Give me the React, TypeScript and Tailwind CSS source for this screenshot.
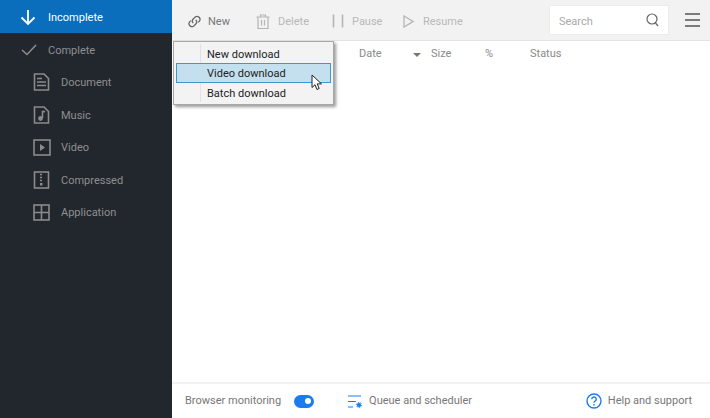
import React from "react";

const Doc = () => (
  <svg width="17" height="18" viewBox="0 0 17 18" fill="none" stroke="#8b8b8b" strokeWidth="1.6">
    <path d="M1.5 1h9.5l4.5 4.5V17h-14z" />
    <path d="M4 5.5h5M4 9h9M4 12.5h9" />
  </svg>
);
const Music = () => (
  <svg width="17" height="18" viewBox="0 0 17 18" fill="none" stroke="#8b8b8b" strokeWidth="1.6">
    <path d="M1.5 1h9.5l4.5 4.5V17h-14z" />
    <path d="M9.5 5v7" />
    <circle cx="7.5" cy="12.5" r="1.6" fill="#8b8b8b" />
    <path d="M9.5 5l2.5 1" />
  </svg>
);
const Video = () => (
  <svg width="18" height="17" viewBox="0 0 18 17" fill="none" stroke="#8b8b8b" strokeWidth="1.6">
    <rect x="1" y="1" width="16" height="15" />
    <path d="M7 5l5 3.5-5 3.5z" fill="#8b8b8b" stroke="none" />
  </svg>
);
const Zip = () => (
  <svg width="17" height="18" viewBox="0 0 17 18" fill="none" stroke="#8b8b8b" strokeWidth="1.6">
    <rect x="1.5" y="1" width="14" height="16" />
    <path d="M7 3.5h2M7 6.5h2M7 9.5h2" />
    <path d="M7 12h2.5v2.5h-2.5z" fill="#8b8b8b" stroke="none" />
  </svg>
);
const Grid = () => (
  <svg width="17" height="17" viewBox="0 0 17 17" fill="none" stroke="#8b8b8b" strokeWidth="1.6">
    <rect x="1" y="1" width="15" height="15" />
    <path d="M8.5 1v15M1 8.5h15" />
  </svg>
);

const items = [
  { label: "Document", icon: <Doc /> },
  { label: "Music", icon: <Music /> },
  { label: "Video", icon: <Video /> },
  { label: "Compressed", icon: <Zip /> },
  { label: "Application", icon: <Grid /> },
];

function Sidebar() {
  return (
    <aside className="w-[172px] shrink-0 bg-[#22272e] flex flex-col">
      <div className="h-[33px] bg-[#0a6ebd] flex items-center pl-[20px] gap-[12px] text-white">
        <svg className="mt-[1px]" width="16" height="17" viewBox="0 0 16 17" fill="none" stroke="#fff" strokeWidth="1.8">
          <path d="M8 1v14M1.5 8.5L8 15l6.5-6.5" />
        </svg>
        <span className="pt-[4px]">Incomplete</span>
      </div>
      <div className="h-[33px] flex items-center pl-[21px] gap-[11px] text-[#8f8f8f]">
        <svg width="16" height="12" viewBox="0 0 16 12" fill="none" stroke="#8b8b8b" strokeWidth="1.6">
          <path d="M1 6l5 4.5L15 1" />
        </svg>
        <span className="pt-[4px]">Complete</span>
      </div>
      {items.map((it) => (
        <div key={it.label} className="h-[32.5px] flex items-center pl-[33px] text-[#8f8f8f]">
          <span className="w-[28px] flex">{it.icon}</span>
          <span className="pt-[2px]">{it.label}</span>
        </div>
      ))}
    </aside>
  );
}

function Tool({ icon, label, cls, w, iw }: { icon: React.ReactNode; label: string; cls: string; w: string; iw: string }) {
  return (
    <div className={`flex items-center mt-[2px] ${w}`}>
      <span className={`flex ${iw}`}>{icon}</span>
      <span className={`pt-[2px] ${cls}`}>{label}</span>
    </div>
  );
}

function Toolbar() {
  return (
    <header className="h-[41px] shrink-0 bg-[#f2f2f2] border-b border-[#e3e3e3] flex items-center pl-[15px] pr-[10px]">
      <Tool
        w="w-[69px]"
        iw="w-[21px]"
        cls="text-[#777777]"
        label="New"
        icon={
          <svg width="15" height="15" viewBox="0 0 15 15" fill="none" stroke="#666" strokeWidth="1.2">
            <path d="M6.2 9.2a3 3 0 0 1 0-4.2l2-2a3 3 0 0 1 4.2 4.2l-1.2 1.2" />
            <path d="M8.8 5.8a3 3 0 0 1 0 4.2l-2 2a3 3 0 0 1-4.2-4.2l1.2-1.2" />
          </svg>
        }
      />
      <Tool
        w="w-[76px]"
        iw="w-[22px]"
        cls="text-[#b8b8b8]"
        label="Delete"
        icon={
          <svg width="14" height="15" viewBox="0 0 14 15" fill="none" stroke="#b5b5b5" strokeWidth="1.2">
            <path d="M0.5 3h13M4.5 3V1h5v2M2 3v11.5h10V3M5.5 6v5.5M8.5 6v5.5" />
          </svg>
        }
      />
      <Tool
        w="w-[71px]"
        iw="w-[20px]"
        cls="text-[#b8b8b8]"
        label="Pause"
        icon={
          <svg width="13" height="14" viewBox="0 0 13 14" fill="none" stroke="#b5b5b5" strokeWidth="1.6">
            <path d="M1.5 0.5v13M10.5 0.5v13" />
          </svg>
        }
      />
      <Tool
        w="w-[60px]"
        iw="w-[20px]"
        cls="text-[#b8b8b8]"
        label="Resume"
        icon={
          <svg width="11" height="13" viewBox="0 0 11 13" fill="none" stroke="#b5b5b5" strokeWidth="1.3">
            <path d="M1 1l9 5.5-9 5.5z" />
          </svg>
        }
      />
      <div className="ml-auto flex items-center gap-[16px]">
        <div className="w-[120px] h-[30px] bg-white border border-[#ececec] flex items-center justify-between pl-[9px] pr-[9px]">
          <span className="text-[#a8a8a8] pt-[5px]">Search</span>
          <svg width="13" height="14" viewBox="0 0 13 14" fill="none" stroke="#666" strokeWidth="1.2">
            <circle cx="6" cy="6" r="5" />
            <path d="M9.5 10l2.5 3" />
          </svg>
        </div>
        <svg width="15" height="14" viewBox="0 0 15 14" fill="none" stroke="#555" strokeWidth="1.5">
          <path d="M0 1h15M0 7h15M0 13h15" />
        </svg>
      </div>
    </header>
  );
}

function Columns() {
  return (
    <div className="h-[27px] flex items-center pl-[187px] text-[#8a8a8a]">
      <span className="w-[54px]">Date</span>
      <span className="w-[8px] h-0 border-x-[4px] border-x-transparent border-t-[4px] border-t-[#777] mr-[10px]" />
      <span className="w-[54px]">Size</span>
      <span className="w-[45px]">%</span>
      <span>Status</span>
    </div>
  );
}

function Menu() {
  return (
    <div className="absolute left-[1px] top-[41px] w-[161px] h-[64px] bg-[#f3f3f3] border border-[#a8a8a8] shadow-[2px_2px_3px_rgba(0,0,0,0.4)] text-[#222222] z-10 py-[1px] px-[2px] flex flex-col justify-center">
      <div className="absolute left-[26px] top-[2px] bottom-[2px] w-px bg-[#e2e2e2]" />
      <div className="h-[20px] flex items-center pl-[31px] pt-[5px] relative">New download</div>
      <div className="h-[20px] flex items-center pl-[30px] pt-[2px] relative bg-[#c4dfee] border border-[#3d98cf]">Video download</div>
      <div className="h-[20px] flex items-center pl-[31px] pt-[2px] relative">Batch download</div>
      <svg className="absolute left-[137px] top-[32px]" width="12" height="17" viewBox="0 0 12 17">
        <path d="M1 1v12.5l3-2.8 2 4.8 2.2-1-2-4.6h4.3z" fill="#fff" stroke="#222" strokeWidth="1" />
      </svg>
    </div>
  );
}

function Footer() {
  return (
    <footer className="h-[36px] shrink-0 border-t-2 border-[#f2f2f2] flex items-center pl-[13px] pr-[18px] text-[#777777]">
      <span>Browser monitoring</span>
      <div className="ml-[13px] w-[20px] h-[13px] rounded-full bg-[#1a7cf0] flex items-center justify-end pr-[3px]">
        <div className="w-[6px] h-[6px] rounded-full bg-white" />
      </div>
      <svg className="ml-[34px]" width="14" height="13" viewBox="0 0 14 13" fill="none" stroke="#1a7cf0" strokeWidth="1.2">
        <path d="M0 1h13M0 6.5h8M0 12h5" />
        <circle cx="11" cy="10" r="1.5" fill="#1a7cf0" />
        <circle cx="11" cy="10" r="2.6" strokeWidth="1" strokeDasharray="1.4 1.3" />
      </svg>
      <span className="ml-[7px]">Queue and scheduler</span>
      <svg className="ml-auto" width="16" height="16" viewBox="0 0 16 16" fill="none" stroke="#1a7cf0" strokeWidth="1.4">
        <circle cx="8" cy="8" r="7" />
        <path d="M5.8 6.2a2.2 2.2 0 1 1 3.4 1.8c-.8.5-1.2 1-1.2 1.8" />
        <path d="M8 11v1.4" />
      </svg>
      <span className="ml-[6px]">Help and support</span>
    </footer>
  );
}

export default function App() {
  return (
    <div className="w-[710px] h-[418px] flex bg-white overflow-hidden text-[11px] font-['Roboto','Noto_Sans',sans-serif]">
      <Sidebar />
      <main className="flex-1 flex flex-col relative">
        <Toolbar />
        <Columns />
        <div className="flex-1" />
        <Footer />
        <Menu />
      </main>
    </div>
  );
}
